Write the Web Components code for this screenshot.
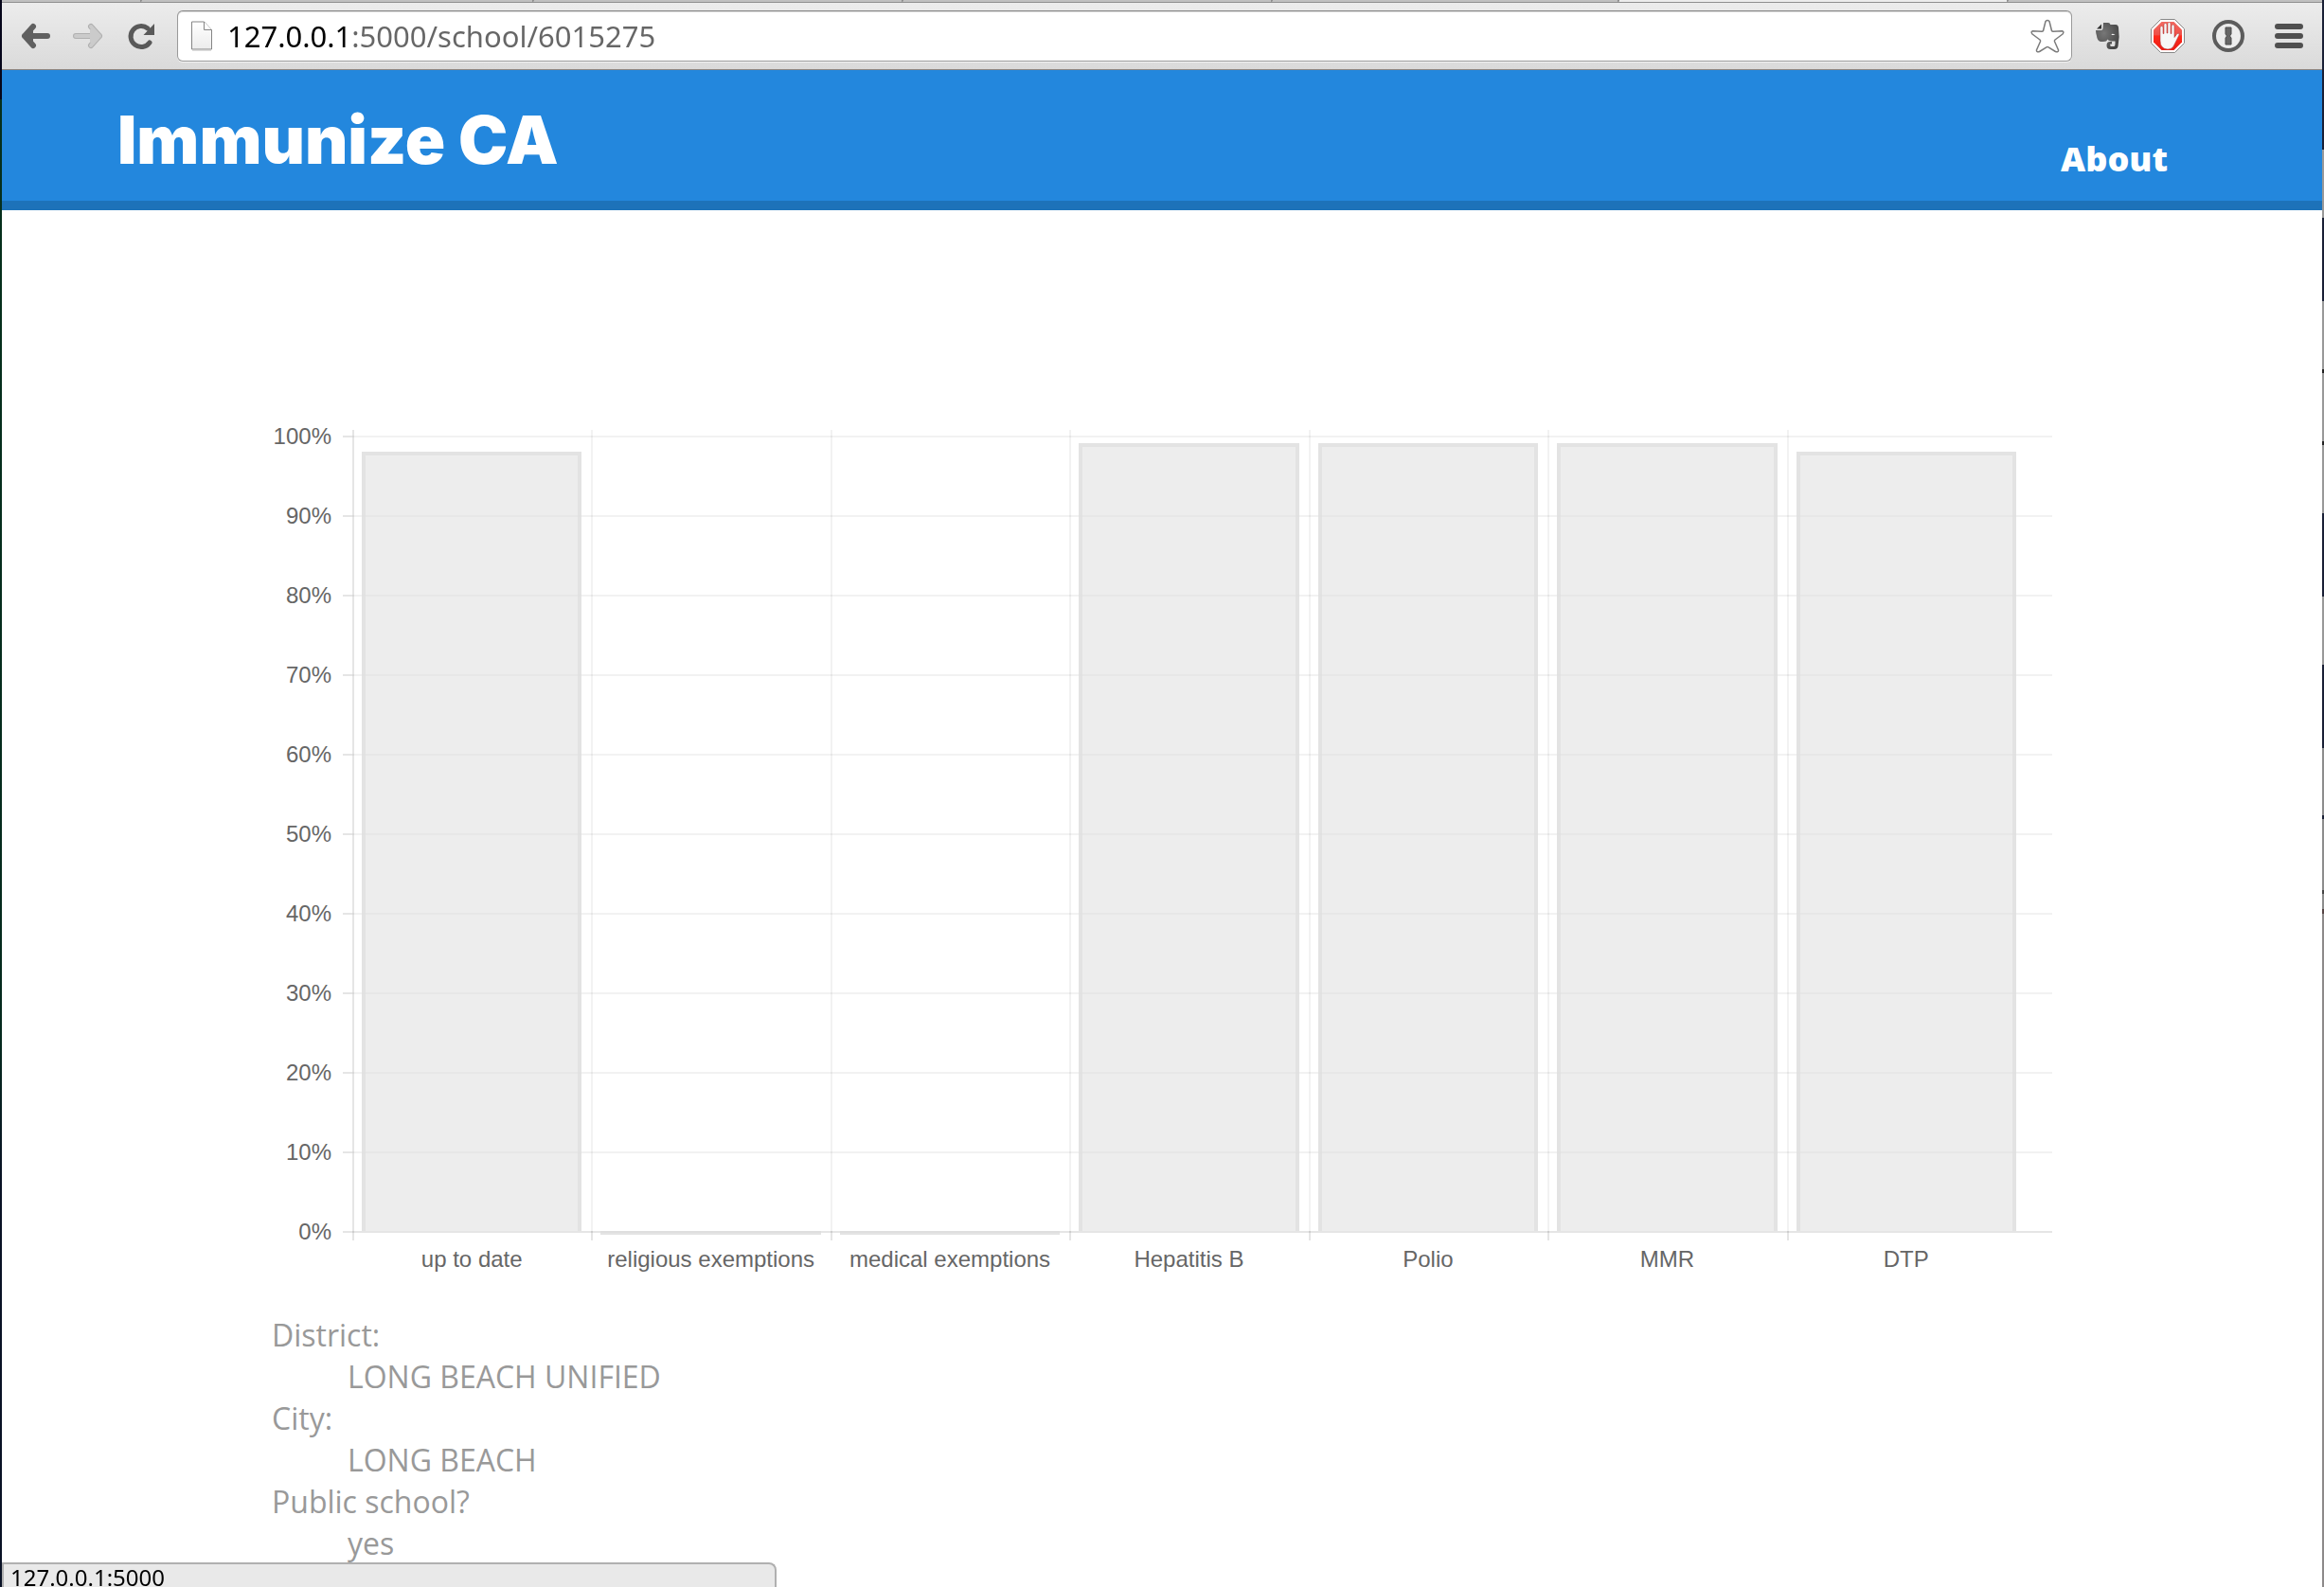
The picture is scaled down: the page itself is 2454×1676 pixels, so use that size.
<!DOCTYPE html>
<html lang="en">
<head>
<meta charset="utf-8">
<title>Immunize CA</title>
<style>
  html, body { margin: 0; height: 100%; }
  body { overflow: hidden; background: #fff; font-family: "Open Sans", "Noto Sans", sans-serif; }
</style>
</head>
<body>
<browser-window>
  <browser-toolbar slot="chrome" url="127.0.0.1:5000/school/6015275"></browser-toolbar>
  <site-header>
    <span slot="title">Immunize CA</span>
    <span slot="link">About</span>
  </site-header>
  <page-container>
    <school-chart></school-chart>
    <school-facts></school-facts>
  </page-container>
  <status-bubble slot="status">127.0.0.1:5000</status-bubble>
</browser-window>

<script>
const define = (name, html, setup) => {
  const template = document.createElement('template');
  template.innerHTML = html;
  customElements.define(name, class extends HTMLElement {
    constructor() {
      super();
      this.attachShadow({ mode: 'open' }).append(template.content.cloneNode(true));
    }
    connectedCallback() { if (setup) setup(this, this.shadowRoot); }
  });
};

define('browser-window', `
  <style>
    :host { display: flex; height: 100vh; overflow: hidden; }
    .edge { flex: 0 0 2px; }
    .left { background: linear-gradient(#06061a 0 105px, #06301c 105px, #052a1e 1100px, #0a1226 1250px); }
    .right { background: linear-gradient(#1a2036 0 158px, #999 158px 230px, #1a2036 230px 318px, #999 318px 390px, #222 390px 394px, #999 394px 466px, #222 466px 470px, #999 470px 542px, #1a2036 542px 630px, #999 630px 702px, #1a2036 702px 790px, #8d8d8d 790px 861px, #1a2036 861px 865px, #8d8d8d 865px 940px, #444 940px 944px, #8d8d8d 944px 960px, #544 960px 965px, #8d8a8a 965px); }
    main { flex: 1; min-width: 0; overflow: hidden; background: #fff; }
  </style>
  <div class="edge left"></div>
  <main><slot name="chrome"></slot><slot></slot></main>
  <div class="edge right"></div>
  <slot name="status"></slot>
`);

define('browser-toolbar', `
  <style>
    :host { display: block; }
    .tabs { display: flex; height: 3px; box-sizing: border-box; background: #c0c0c0; border-bottom: 1px solid #909090; }
    .tabs i { flex: 0 0 390px; box-sizing: border-box; border-right: 2px solid #8c8c8c; border-radius: 0 0 4px 0; }
    .tabs i:nth-child(1) { flex-basis: 148px; }
    .tabs i:nth-child(2) { flex-basis: 414px; }
    .tabs i:nth-child(5) { flex-basis: 366px; }
    .tabs i:nth-child(6) { flex-basis: 411px; background: #ececec; }
    .tabs i:nth-child(7) { flex: 1; border-right: 0; }
    .bar { display: flex; align-items: center; gap: 23px; height: 70px; padding: 0 15px 0 20px; background: linear-gradient(#ececec, #dadada); border-bottom: 1px solid #8d8580; }
    button { display: flex; flex: none; padding: 0; border: 0; background: none; }
    svg { display: block; }
    .box { display: flex; flex: 1; align-items: center; box-sizing: border-box; height: 54px; padding: 0 7px 0 13px; border: 1px solid #9a9a9a; border-top-color: #858585; border-radius: 6px; background: #fff; box-shadow: inset 0 1px 1px #ddd, 0 1px 0 #f4f4f4; }
    input { flex: 1; min-width: 0; height: 48px; margin: 0 0 0 15px; padding: 0; border: 0; outline: 0; font: 31px/48px "Noto Sans", sans-serif; color: transparent; background: linear-gradient(90deg, #000 0 131px, #666 131px); -webkit-background-clip: text; background-clip: text; }
    .tools { display: flex; gap: 24px; margin-left: -6px; }
  </style>
  <div class="tabs"><i></i><i></i><i></i><i></i><i></i><i></i><i></i></div>
  <div class="bar">
    <button aria-label="Back"><svg width="32" height="32" viewBox="0 0 32 32" fill="none" stroke="#606060" stroke-width="6" stroke-linecap="round" stroke-linejoin="round"><path d="M4 16H28M13 6L4 16L13 26"/><path d="M5 16L12 10V22Z" fill="#606060" stroke-width="2"/></svg></button>
    <button aria-label="Forward"><svg width="32" height="32" viewBox="0 0 32 32" fill="none" stroke-linecap="round" stroke-linejoin="round"><path d="M28 16H3M19 6L28 16L19 26" stroke="#b0b0b0" stroke-width="6"/><path d="M28 16H3M19 6L28 16L19 26M27 16L20 10V22Z" stroke="#cbcbcb" stroke-width="4" fill="#cbcbcb"/></svg></button>
    <button aria-label="Reload"><svg width="32" height="32" viewBox="0 0 32 32" fill="none"><path d="M26 23A11 11 0 1 1 24 8" stroke="#595959" stroke-width="5" stroke-linecap="round"/><path d="M31 3V15H19.500Z" fill="#595959"/></svg></button>
    <div class="box">
      <svg width="24" height="32" viewBox="0 0 24 32"><defs><linearGradient id="p" x2="0" y2="1"><stop stop-color="#fff"/><stop offset="1" stop-color="#ececec"/></linearGradient></defs><path d="M1.500 1H14.500L22.500 9.500V30H1.500Z" fill="url(#p)" stroke="#858585"/><path d="M14.500 1V9.500H22.500" fill="#fff" stroke="#858585"/><path d="M2 31.500H22" stroke="#ddd"/></svg>
      <input type="text" aria-label="Address" spellcheck="false">
      <button aria-label="Bookmark this page"><svg width="36" height="36" viewBox="0 0 36 36" fill="#fff" stroke="#7b7b7b" stroke-width="1.500" stroke-linejoin="round"><path d="M16 2.500Q18 .5 20 2.500L22.500 12.500Q23 13.200 24 13.200L33.500 12.700Q36 13.500 34 16L26 22Q25.200 22.800 25.600 24L29.600 33Q29.500 35.500 26.500 34.500L19 29.800Q18 29.300 17 29.800L9.500 34.500Q6.500 35.500 6.400 33L10.400 24Q10.800 22.800 10 22L2 16Q0 13.500 2.500 12.700L12 13.200Q13 13.200 13.500 12.500Z"/></svg></button>
    </div>
    <div class="tools">
      <button aria-label="Evernote"><svg width="40" height="40" viewBox="0 0 40 40"><defs><radialGradient id="e" cx=".35" cy=".4" r=".75"><stop stop-color="#777"/><stop offset="1" stop-color="#434343"/></radialGradient></defs><path d="M16 6H21Q23 6 23.500 8H29Q31.500 8 32 11Q33.500 21 31.500 31Q31 34 27.500 34H23.500Q19.500 34 19.500 30Q19.500 26 23 26H25V28.500H23.500Q22.500 30.500 24.500 31H27.500Q28.500 30.500 28.500 28V25.500Q22 26 20.500 23.500Q19.500 26 16 26H13Q9.500 25 9 20Q8 17 8 14H13.500Q15.500 14 15.500 12Z" fill="url(#e)"/><path d="M9 12.500L14 7.500V12.500Z" fill="#333"/><path d="M24.500 19Q25 16.500 28.500 19Z" fill="#eee"/></svg></button>
      <button aria-label="AdBlock"><svg width="40" height="40" viewBox="0 0 40 40"><defs><linearGradient id="r" x2="0" y2="1"><stop stop-color="#f26a62"/><stop offset=".45" stop-color="#ef5048"/><stop offset=".5" stop-color="#ff2a1c"/><stop offset="1" stop-color="#e81c14"/></linearGradient></defs><path d="M12.500 2.500H27.500L37.500 12.500V27.500L27.500 37.500H12.500L2.500 27.500V12.500Z" fill="#fff" stroke="#888"/><path d="M13.500 5H26.500L35 13.500V26.500L26.500 35H13.500L5 26.500V13.500Z" fill="url(#r)"/><path d="M12 20V10.500Q13.500 8.500 15 10.500V17.500H16V7.500Q17.500 5.500 19 7.500V17H20V6.500Q21.500 4.500 23 6.500V17.500H24V9Q25.500 7 27 9V21.500L30 17.500Q32.500 16.500 32 19L26.500 30Q25 34 20 34Q12 33.500 12 25Z" fill="#f7f7f7" stroke="#a33" stroke-width=".5"/></svg></button>
      <button aria-label="1Password"><svg width="40" height="40" viewBox="0 0 40 40"><circle cx="20" cy="20" r="15" fill="#ececec" stroke="#5c5c5c" stroke-width="4"/><path d="M17 11H23V18L21.500 20L23 22V29H17V22L18.500 20L17 18Z" fill="#666" stroke="#4b4b4b"/></svg></button>
      <button aria-label="Menu"><svg width="40" height="40" viewBox="0 0 40 40" stroke="#4f4f4f" stroke-width="6" stroke-linecap="round"><path d="M8 10H32M8 20H32M8 30H32"/></svg></button>
    </div>
  </div>
`, (host, root) => { root.querySelector('input').value = host.getAttribute('url'); });

define('site-header', `
  <style>
    :host { display: block; background: #2387dd; border-bottom: 10px solid #1d72b9; color: #fff; }
    header { display: flex; justify-content: space-between; align-items: flex-end; height: 138px; box-sizing: border-box; padding: 0 163px 18px 122px; }
    h1 { margin: 0; font: 900 70px/92px Inter, sans-serif; }
    a { font: 800 36px/52px "Open Sans", sans-serif; color: inherit; text-decoration: none; }
  </style>
  <header>
    <h1><slot name="title"></slot></h1>
    <nav><a href="#about"><slot name="link"></slot></a></nav>
  </header>
`);

define('page-container', `
  <style>
    :host { display: block; box-sizing: border-box; width: 100%; max-width: 1880px; margin: 0 auto; padding-top: 197px; }
  </style>
  <slot></slot>
`);

define('school-chart', `
  <style>
    :host { display: grid; grid-template-columns: 63px 1fr; column-gap: 12px; align-items: start; font: 24px/40px "Liberation Sans", Arial, sans-serif; color: #666; }
    ol { margin: 0; padding: 0; list-style: none; text-align: right; }
    ol li { line-height: 84px; }
    .plot { display: grid; }
    .lines, .columns { grid-area: 1 / 1; min-width: 0; }
    .lines { padding-top: 41px; }
    .lines div { height: 84px; background: linear-gradient(90deg, rgba(0,0,0,.1) 10px, rgba(0,0,0,.05) 10px) top / 100% 2px no-repeat; }
    .lines div:last-child { height: 2px; background: rgba(0,0,0,.1); }
    .columns { display: flex; padding: 35px 28px 0 10px; }
    .column { flex: 1 1 0; min-width: 0; text-align: center; white-space: nowrap; }
    .area { display: flex; align-items: flex-end; height: 846px; padding: 0 10px 0 8px; border-left: 2px solid rgba(0,0,0,.05); box-sizing: border-box; }
    .column:first-child .area { border-color: rgba(0,0,0,.1); }
    .tick { height: 10px; border-left: 2px solid rgba(0,0,0,.1); }
    .bar { flex: 1; box-sizing: border-box; height: calc(var(--value) * 84px / 10); border: 4px solid rgba(220,220,220,.8); border-bottom: 0; background: rgba(220,220,220,.5) padding-box; }
    .bar.zero { height: 4px; margin-bottom: -4px; border-width: 4px 0 0; }
  </style>
  <ol></ol>
  <div class="plot">
    <div class="lines"></div>
    <div class="columns"></div>
  </div>
`, (host, root) => {
  const data = [['up to date', 98], ['religious exemptions', 0], ['medical exemptions', 0], ['Hepatitis B', 99], ['Polio', 99], ['MMR', 99], ['DTP', 98]];
  const steps = Array.from({ length: 11 }, (_, i) => 100 - i * 10);
  root.querySelector('ol').innerHTML = steps.map(s => `<li>${s}%</li>`).join('');
  root.querySelector('.lines').innerHTML = steps.map(() => '<div></div>').join('');
  root.querySelector('.columns').innerHTML = data.map(([label, value]) => `
    <div class="column"><div class="area"><div class="bar${value ? '' : ' zero'}" style="--value:${value}"></div></div><div class="tick"></div><div>${label}</div></div>`).join('');
});

define('school-facts', `
  <style>
    :host { display: block; margin-top: 38px; font: 32px/44px "Open Sans", "Noto Sans", sans-serif; color: #999; }
    dl { margin: 0; }
    dd { margin: 0 0 0 80px; }
  </style>
  <dl>
    <dt>District:</dt><dd>LONG BEACH UNIFIED</dd>
    <dt>City:</dt><dd>LONG BEACH</dd>
    <dt>Public school?</dt><dd>yes</dd>
  </dl>
`);

define('status-bubble', `
  <style>
    :host { position: fixed; left: 2px; bottom: 0; box-sizing: border-box; width: 818px; height: 26px; padding: 0 7px; border: 2px solid #b0b0b0; border-bottom: 0; border-radius: 0 8px 0 0; background: #e9e9e9; color: #000; font: 24px/28px "Noto Sans", sans-serif; }
  </style>
  <slot></slot>
`);
</script>
</body>
</html>
